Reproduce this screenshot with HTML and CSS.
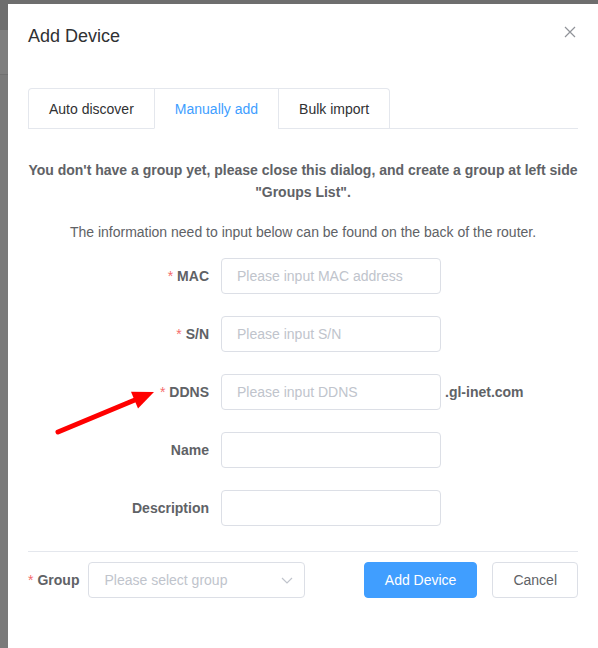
FILE: index.html
```html
<!DOCTYPE html>
<html lang="en">
<head>
    <meta charset="UTF-8">
    <meta name="viewport" content="width=device-width, initial-scale=1.0">
    <title>Add Device</title>
    <link rel="stylesheet" href="styles.css">
</head>
<body>
    <div class="dialog">
        <div class="dialog-header">
            <span class="dialog-title">Add Device</span>
            <svg class="dialog-close" width="16" height="16" viewBox="0 0 16 16">
                <path d="M3 3 L13 13 M13 3 L3 13" stroke="#909399" stroke-width="1.2" fill="none"/>
            </svg>
        </div>
        <div class="dialog-body">
            <div class="tabs-header">
                <div class="tabs-nav">
                    <div class="tab">Auto discover</div>
                    <div class="tab active">Manually add</div>
                    <div class="tab">Bulk import</div>
                </div>
            </div>

            <p class="warning">You don't have a group yet, please close this dialog, and create a group at left side<br>"Groups List".</p>
            <p class="info">The information need to input below can be found on the back of the router.</p>

            <div class="form">
                <div class="form-item">
                    <label class="form-label required">MAC</label>
                    <input class="input" type="text" placeholder="Please input MAC address">
                </div>
                <div class="form-item">
                    <label class="form-label required">S/N</label>
                    <input class="input" type="text" placeholder="Please input S/N">
                </div>
                <div class="form-item">
                    <label class="form-label required">DDNS</label>
                    <input class="input" type="text" placeholder="Please input DDNS">
                    <span class="suffix">.gl-inet.com</span>
                </div>
                <div class="form-item">
                    <label class="form-label">Name</label>
                    <input class="input" type="text">
                </div>
                <div class="form-item">
                    <label class="form-label">Description</label>
                    <input class="input" type="text">
                </div>
            </div>

            <div class="footer">
                <label class="group-label required">Group</label>
                <div class="select">
                    <span class="select-placeholder">Please select group</span>
                    <svg class="select-arrow" width="12" height="7" viewBox="0 0 12 7">
                        <polyline points="1,1 6,6 11,1" stroke="#c0c4cc" stroke-width="1.2" fill="none"/>
                    </svg>
                </div>
                <button class="btn btn-primary">Add Device</button>
                <button class="btn">Cancel</button>
            </div>
        </div>
    </div>

    <!-- annotation arrow -->
    <svg class="annotation" width="598" height="648" viewBox="0 0 598 648">
        <line x1="58" y1="432" x2="136" y2="399.5" stroke="#ff0000" stroke-width="5" stroke-linecap="round"/>
        <polygon points="131,391.8 154,392 138,408.4" fill="#ff0000"/>
    </svg>
</body>
</html>
```

FILE: styles.css
```css
body {
    margin: 0;
    height: 648px;
    overflow: hidden;
    font-family: "Liberation Sans", Arial, sans-serif;
    background: linear-gradient(#6e6e6e 0 30px, #7e7e7e 30px 74px, #707070 74px 75px, #7a7a7a 75px);
}
.dialog {
    margin: 4px 0 0 8px;
    width: 590px;
    height: 644px;
    background-color: #fff;
}
.dialog-header {
    display: flex;
    justify-content: space-between;
    align-items: flex-start;
    padding: 20px 20px 10px;
}
.dialog-title {
    font-size: 18px;
    line-height: 24px;
    color: #303133;
}
.dialog-body {
    padding: 30px 20px;
}
.tabs-header {
    display: flex;
    border-bottom: 1px solid #e4e7ed;
}
.tabs-nav {
    display: flex;
    border: 1px solid #e4e7ed;
    border-bottom: none;
    border-radius: 4px 4px 0 0;
    margin-bottom: -1px;
}
.tab {
    height: 39px;
    line-height: 40px;
    padding: 0 20px;
    font-size: 14px;
    color: #303133;
    border-left: 1px solid #e4e7ed;
    border-bottom: 1px solid transparent;
}
.tab:first-child {
    border-left: none;
}
.tab.active {
    color: #409eff;
    border-bottom-color: #fff;
}
.warning,
.info {
    font-size: 14px;
    line-height: 22px;
    color: #606266;
    text-align: center;
}
.warning {
    font-weight: bold;
    margin: 30px 0 0;
}
.info {
    margin: 18px 0 0;
}
.form {
    margin-top: 15px;
}
.form-item {
    display: flex;
    align-items: center;
    height: 36px;
    margin-bottom: 22px;
}
.form-item:last-child {
    margin-bottom: 25px;
}
.form-label {
    width: 193px;
    box-sizing: border-box;
    padding-right: 12px;
    text-align: right;
    font-size: 14px;
    font-weight: bold;
    color: #606266;
}
.required::before {
    content: "*";
    color: #f56c6c;
    font-weight: normal;
    margin-right: 4px;
}
.input {
    width: 220px;
    height: 36px;
    box-sizing: border-box;
    border: 1px solid #dcdfe6;
    border-radius: 4px;
    padding: 0 15px;
    font-family: inherit;
    font-size: 14px;
    color: #606266;
    outline: none;
}
.input::placeholder {
    color: #c0c4cc;
}
.suffix {
    margin-left: 4px;
    font-size: 14px;
    font-weight: bold;
    color: #606266;
}
.footer {
    display: flex;
    align-items: center;
    border-top: 1px solid #e4e7ed;
    padding-top: 10px;
}
.group-label {
    padding-right: 9px;
    font-size: 14px;
    font-weight: bold;
    color: #606266;
}
.select {
    position: relative;
    width: 217px;
    height: 36px;
    box-sizing: border-box;
    border: 1px solid #dcdfe6;
    border-radius: 4px;
    padding: 0 15px;
    line-height: 34px;
    font-size: 14px;
}
.select-placeholder {
    color: #c0c4cc;
}
.select-arrow {
    position: absolute;
    right: 11px;
    top: 14px;
}
.btn {
    height: 36px;
    padding: 0 20px;
    font-family: inherit;
    font-size: 14px;
    color: #606266;
    background-color: #fff;
    border: 1px solid #dcdfe6;
    border-radius: 4px;
    margin-left: 15px;
}
.btn-primary {
    margin-left: auto;
    color: #fff;
    background-color: #409eff;
    border-color: #409eff;
}
.annotation {
    position: absolute;
    left: 0;
    top: 0;
    pointer-events: none;
}
```
